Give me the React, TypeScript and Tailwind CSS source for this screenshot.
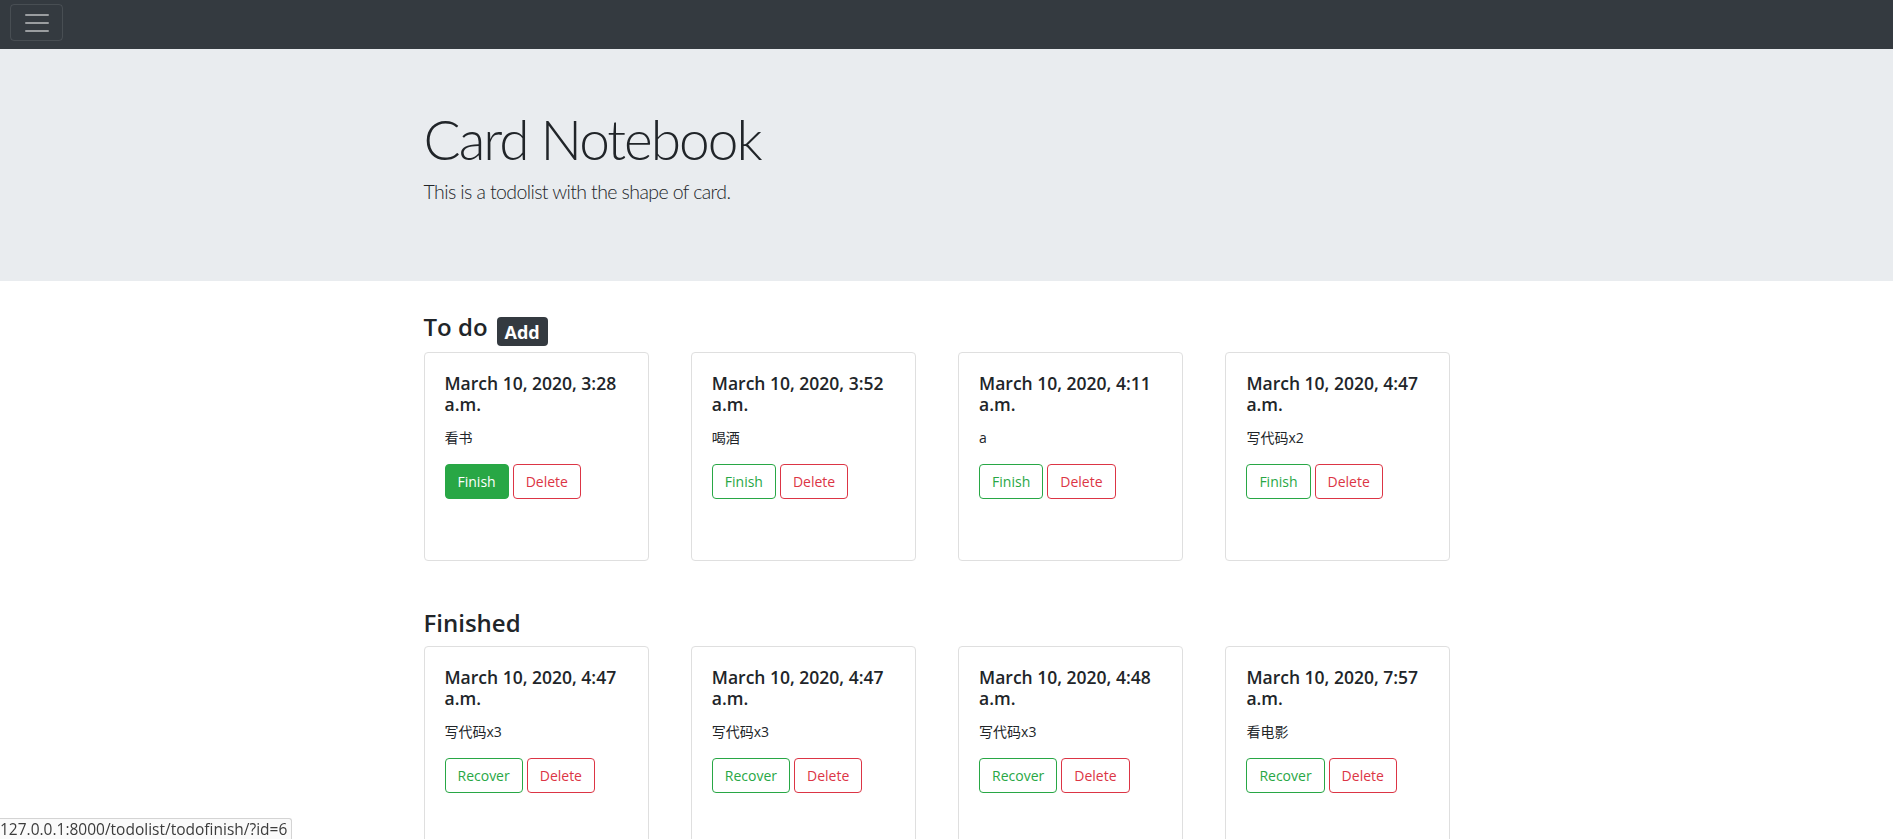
import React from 'react'

type Item = { date: string; text: string }

const todos: Item[] = [
  { date: 'March 10, 2020, 3:28 a.m.', text: '看书' },
  { date: 'March 10, 2020, 3:52 a.m.', text: '喝酒' },
  { date: 'March 10, 2020, 4:11 a.m.', text: 'a' },
  { date: 'March 10, 2020, 4:47 a.m.', text: '写代码x2' },
]

const finished: Item[] = [
  { date: 'March 10, 2020, 4:47 a.m.', text: '写代码x3' },
  { date: 'March 10, 2020, 4:47 a.m.', text: '写代码x3' },
  { date: 'March 10, 2020, 4:48 a.m.', text: '写代码x3' },
  { date: 'March 10, 2020, 7:57 a.m.', text: '看电影' },
]

const font = '[font-family:"Open_Sans","Noto_Sans_CJK_SC",sans-serif]'
const light = '[font-family:"Lato","Open_Sans",sans-serif]'

function Card({
  item,
  action,
  solid,
}: {
  item: Item
  action: string
  solid?: boolean
}) {
  return (
    <div className="w-[225px] h-[209px] bg-white border border-[#dfdfdf] rounded-[4px] px-[20px] pt-[20px]">
      <h5 className="text-[17.5px] leading-[21px] font-semibold text-[#212529] mb-[12px]">
        {item.date}
      </h5>
      <p className="text-[14px] leading-[21px] text-[#212529] mb-[16px]">{item.text}</p>
      <div className="flex gap-[4px]">
        <button
          className={`h-[35px] px-[12px] text-[14px] rounded-[4px] border border-[#28a745] ${
            solid ? 'bg-[#28a745] text-white' : 'bg-white text-[#28a745]'
          }`}
        >
          {action}
        </button>
        <button className="h-[35px] px-[12px] text-[14px] rounded-[4px] border border-[#dc3545] bg-white text-[#dc3545]">
          Delete
        </button>
      </div>
    </div>
  )
}

export default function App() {
  return (
    <div className={`${font} min-h-screen bg-white text-[#212529] relative`}>
      <nav className="h-[49px] bg-[#343a40] pl-[10px] pt-[4px]">
        <button className="w-[53px] h-[37px] rounded-[4px] border border-white/10 flex items-center justify-center">
          <svg width="30" height="30" viewBox="0 0 30 30">
            <path
              d="M4 7h22M4 15h22M4 23h22"
              stroke="rgba(255,255,255,0.5)"
              strokeWidth="2"
              strokeLinecap="round"
            />
          </svg>
        </button>
      </nav>

      <header className="h-[232px] bg-[#e9ecef]">
        <div className={`${light} w-[1140px] mx-auto pl-[47px] pt-[57px]`}>
          <h1 className="text-[55px] leading-[67px] font-light tracking-[-2px] mb-[4px]">
            Card Notebook
          </h1>
          <p className="text-[19.5px] leading-[30px] font-light tracking-[-0.6px] text-[#212529]">
            This is a todolist with the shape of card.
          </p>
        </div>
      </header>

      <main className="w-[1140px] mx-auto pl-[47px] pt-[30px]">
        <section>
          <h4 className="flex items-start gap-[9px] text-[24px] leading-[29px] font-semibold h-[41px]">
            <span className="mt-[1px]">To do</span>
            <span className="mt-[6px] h-[29px] flex items-center bg-[#343a40] text-white text-[18px] font-bold leading-none rounded-[4px] px-[8px]">
              Add
            </span>
          </h4>
          <div className="grid grid-cols-[repeat(4,225px)] gap-x-[42.3px]">
            {todos.map((t, i) => (
              <Card key={i} item={t} action="Finish" solid={i === 0} />
            ))}
          </div>
        </section>

        <section className="mt-[47px]">
          <h4 className="text-[24px] leading-[29px] font-semibold mb-[9px]">Finished</h4>
          <div className="grid grid-cols-[repeat(4,225px)] gap-x-[42.3px]">
            {finished.map((t, i) => (
              <Card key={i} item={t} action="Recover" />
            ))}
          </div>
        </section>
      </main>

      <div className="fixed left-0 bottom-0 h-[21px] pr-[4px] bg-[#fafafa] border-t border-r border-[#d4d4d4] rounded-tr-[3px] text-[15.5px] leading-[20px] text-[#3c3c3c]">
        127.0.0.1:8000/todolist/todofinish/?id=6
      </div>
    </div>
  )
}
